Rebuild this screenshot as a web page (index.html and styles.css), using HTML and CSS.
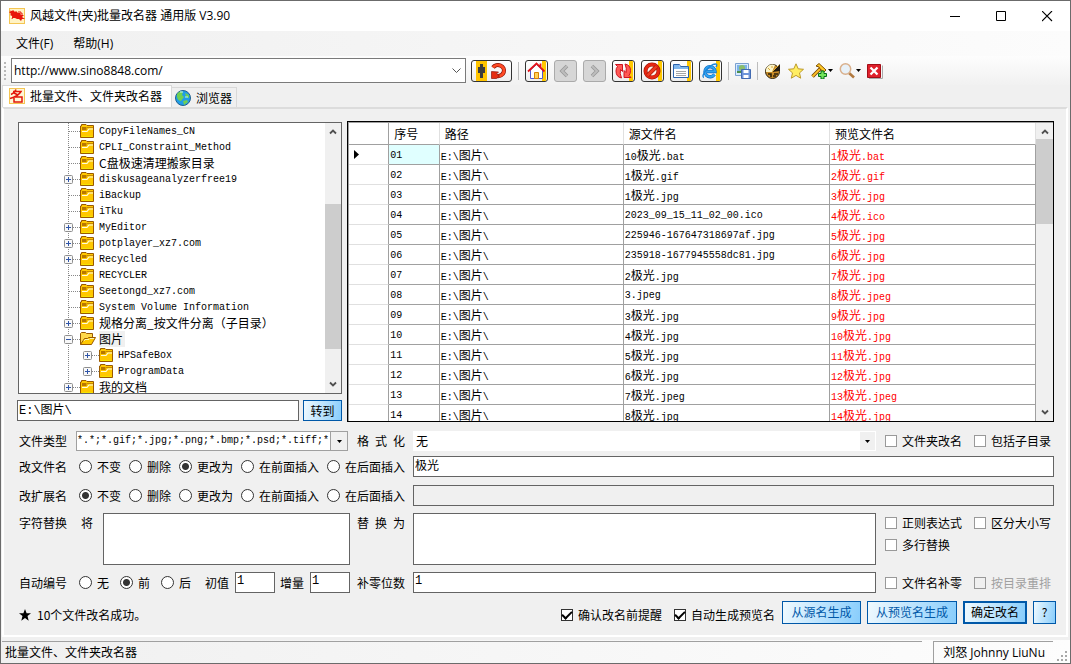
FILE: index.html
```html
<!DOCTYPE html>
<html lang="zh-CN">
<head>
<meta charset="utf-8">
<title>风越文件(夹)批量改名器 通用版 V3.90</title>
<link rel="stylesheet" href="styles.css">
</head>
<body>
<svg class="defs" aria-hidden="true">
  <symbol id="folder" viewBox="0 0 16 14">
    <path d="M.5 13.500v-11.500h1v-1.500h4.500l1 1h6.500v12z" fill="#ffc800" stroke="#9a5a00"/>
    <path d="M2 3h4.500v3h-4.500z" fill="#b87800"/>
    <path d="M7 3.500h6" stroke="#c98a00"/>
    <path d="M2 7.500h5l2-2.500h4" fill="none" stroke="#fffbe0" stroke-width="1.200"/>
    <path d="M2 12.500h10.500" stroke="#f4e400"/>
  </symbol>
  <symbol id="folder-open" viewBox="0 0 16 14">
    <path d="M.5 12.500v-11l1-1h4l1 1h6v4" fill="#ffd84a" stroke="#9a5a00"/>
    <path d="M.5 12.500l4-6h3l1-1h7l-4 7z" fill="#ffc800" stroke="#9a5a00"/>
    <path d="M4 9l1-1.500h4l1-1h4" fill="none" stroke="#fff6b0"/>
  </symbol>
  <symbol id="plus" viewBox="0 0 9 9">
    <rect x=".5" y=".5" width="8" height="8" rx="1" fill="#f8f8f8" stroke="#8e8e8e"/>
    <path d="M2 4.500h5M4.500 2v5" stroke="#2f55a8"/>
  </symbol>
  <symbol id="minus" viewBox="0 0 9 9">
    <rect x=".5" y=".5" width="8" height="8" rx="1" fill="#f8f8f8" stroke="#8e8e8e"/>
    <path d="M2 4.500h5" stroke="#2f55a8"/>
  </symbol>
  <symbol id="up" viewBox="0 0 8 6"><path d="M1 4.500l3-3 3 3" fill="none" stroke="#505050" stroke-width="1.800"/></symbol>
  <symbol id="down" viewBox="0 0 8 6"><path d="M1 1.500l3 3 3-3" fill="none" stroke="#505050" stroke-width="1.800"/></symbol>
  <symbol id="caret" viewBox="0 0 5 3"><path d="M0 0h5l-2.500 3z" fill="#000"/></symbol>
</svg>

<div class="window">
  <header class="titlebar">
    <svg class="app-icon" viewBox="0 0 16 16"><rect x=".5" y=".5" width="15" height="15" fill="#fff3c4" stroke="#f4c552"/><path d="M0 2l3 1 1-1 2 2 1-1 2 2 2 0 1 2 3 0-2 2 3 2-3 0-1 2-2-2-2 0-2-1-2 0-1-2-2-1 1-1-2-2 2-1z" fill="#e8170c"/><path d="M9 4h3v2h2M4 8l-1 3" fill="none" stroke="#e8170c"/></svg>
    <h1 class="title">风越文件(夹)批量改名器 通用版 V3.90</h1>
    <div class="captions">
      <button class="caption" aria-label="最小化"><svg viewBox="0 0 11 11"><path d="M0 5.500h10" stroke="#000"/></svg></button>
      <button class="caption" aria-label="最大化"><svg viewBox="0 0 11 11"><path d="M.5 .5h9v9h-9z" fill="none" stroke="#000"/></svg></button>
      <button class="caption" aria-label="关闭"><svg viewBox="0 0 11 11"><path d="M0 0l10 10M10 0L0 10" stroke="#000" stroke-width="1.100"/></svg></button>
    </div>
  </header>

  <nav class="menubar">
    <button class="menu">文件(F)</button>
    <button class="menu">帮助(H)</button>
  </nav>

  <div class="toolbar">
    <i class="grip"></i>
    <div class="combo address">
      <select aria-label="地址"><option>http://www.sino8848.com/</option></select>
      <svg class="chev" viewBox="0 0 9 6"><path d="M.5 .5l4 4 4-4" fill="none" stroke="#555"/></svg>
    </div>
    <button class="tool wide" aria-label="转到"><svg viewBox="0 0 39 20"><path d="M4 0h11v20h-11z" fill="#ffc400"/><path d="M8 3h3v3h2v6h-2v5h-3v-5h-2v-6h2z" fill="#3c3c3c"/><path d="M21 6.500a6 5.500 0 1 1 4 8.500" fill="none" stroke="#8c1208" stroke-width="4.200"/><path d="M21 6.500a6 5.500 0 1 1 4 8.500" fill="none" stroke="#ff4a24" stroke-width="2.800"/><path d="M19.500 17.500v-7l7 .5-2 2 3 2-3 2.500z" fill="#e62c10" stroke="#8c1208" stroke-width=".7"/></svg></button>
    <i class="sep"></i>
    <div class="tools">
      <button class="tool" aria-label="主页"><svg viewBox="0 0 21 20"><path d="M16 0h4v20h-4z" fill="#ffc800"/><path d="M4.500 9v8.500h12v-8.500l-6-5.500z" fill="#fff" stroke="#4f5ad0"/><path d="M8.500 17.500v-6h4v6z" fill="#ffd25a" stroke="#d98200"/><path d="M2 10.500l8.500-8 8 8M14.500 2.500v4" fill="none" stroke="#e3141b" stroke-width="1.800"/></svg></button>
      <button class="tool" disabled aria-label="后退"><svg viewBox="0 0 21 20"><path d="M12 5l-5 5 5 5" fill="none" stroke="#999" stroke-width="3.600"/><path d="M12 5l-5 5 5 5" fill="none" stroke="#bdbdbd" stroke-width="2"/></svg></button>
      <button class="tool" disabled aria-label="前进"><svg viewBox="0 0 21 20"><path d="M8 5l5 5-5 5" fill="none" stroke="#999" stroke-width="3.600"/><path d="M8 5l5 5-5 5" fill="none" stroke="#bdbdbd" stroke-width="2"/></svg></button>
      <button class="tool" aria-label="刷新"><svg viewBox="0 0 21 20"><path d="M16 0h4v20h-4z" fill="#ffc800"/><path d="M8.500 17q-5.500-1-5.500-7 0-3 1.500-4.500l-2-2h7v7l-2-2q-1 4 1 8.500zM12 3q5.500 1 5.500 6.500 0 3-1.500 5l2 2h-7v-7l2 2q1-4-1-8.500z" fill="#ff5a55" stroke="#cf1420"/></svg></button>
      <button class="tool" aria-label="停止"><svg viewBox="0 0 21 20"><path d="M16 0h4v20h-4z" fill="#ffc800"/><circle cx="10" cy="10" r="6.500" fill="#fff0e8" stroke="#9d1408" stroke-width="4"/><circle cx="10" cy="10" r="6.500" fill="none" stroke="#e62712" stroke-width="2.800"/><path d="M5.500 14.500l9-9" stroke="#b01a08" stroke-width="4"/><path d="M5.500 14.500l9-9" stroke="#ed3a20" stroke-width="2.500"/></svg></button>
      <button class="tool" aria-label="文件夹"><svg viewBox="0 0 21 20"><path d="M16 0h4v20h-4z" fill="#ffc800"/><path d="M2.500 16.500v-13h6l1 2h8v11z" fill="#fff" stroke="#2d63ac"/><path d="M3 4h5l1 2h8v2h-14z" fill="#80b7ed"/><path d="M5 10.500h10M5 12.500h10M5 14.500h10" stroke="#a6a6a6"/></svg></button>
      <button class="tool" aria-label="浏览"><svg viewBox="0 0 21 20"><path d="M16 0h4v20h-4z" fill="#ffc800"/><path d="M14.500 13.500q-2 2.500-4.500 2.200a5 5 0 1 1 5-5.200h-8" fill="none" stroke="#1169c4" stroke-width="3.400"/><path d="M14.500 13.500q-2 2.500-4.500 2.200a5 5 0 1 1 5-5.200h-8" fill="none" stroke="#2fa5f2" stroke-width="2.200"/><path d="M4 16.500c-4-1 5-13 11.500-13.500 2 0 1 2 .5 3" fill="none" stroke="#1d86da" stroke-width="1.400"/></svg></button>
    </div>
    <i class="sep"></i>
    <button class="flat" aria-label="保存图片"><svg viewBox="0 0 16 16"><path d="M.5 .5h13v12h-13z" fill="#d9ecff" stroke="#7ba0d0"/><path d="M2 2h10v8h-10z" fill="#7db3e8"/><circle cx="7" cy="5" r="3" fill="#8bbd6b"/><path d="M2 8h9v2h-9z" fill="#4c8f4a"/><path d="M6.500 6.500h9v9h-9z" fill="#6c94da" stroke="#416ab1"/><path d="M8.500 7h5v3h-5zM8.500 12h5v3h-5z" fill="#fff"/></svg></button>
    <i class="sep"></i>
    <div class="flats">
      <button class="flat" aria-label="选项"><svg viewBox="0 0 16 16"><circle cx="7.500" cy="8.500" r="7" fill="#c88c28" stroke="#2b210b"/><path d="M1 9a6.500 6.500 0 0 1 9-7l-3 7z" fill="#fbf4c8"/><path d="M7 9l8-8v7z" fill="#201a12"/><path d="M3 11h3v3M9 11h4M8 13h3" fill="none" stroke="#2b210b" stroke-width="1.600"/><path d="M7 9l7-7M3 5l2 2M7 3v2" stroke="#d9a93a"/></svg></button>
      <button class="flat" aria-label="收藏"><svg viewBox="0 0 16 16"><path d="M8 .8l2.200 5 5.300.5-4 3.600 1.200 5.300-4.700-2.800-4.700 2.800 1.200-5.300-4-3.600 5.300-.5z" fill="#ffee62" stroke="#bd9a2b"/></svg></button>
      <button class="flat drop" aria-label="工具"><svg viewBox="0 0 16 16"><path d="M1.500 13.500l8-8" stroke="#704500" stroke-width="3.500"/><path d="M1.500 13.500l8-8" stroke="#ffc028" stroke-width="1.800"/><path d="M5 3l3-2.500 7 6.500-2 2-4-3-1-2z" fill="#ffc928" stroke="#805000"/><path d="M10 8h3v2.500h2.500v3h-2.500v2.500h-3v-2.500h-2.500v-3h2.500z" fill="#73e45c" stroke="#047018"/></svg><svg class="caret"><use href="#caret"/></svg></button>
      <button class="flat drop" aria-label="搜索"><svg viewBox="0 0 16 16"><path d="M10 10l5 4.500" stroke="#b27a40" stroke-width="2.600"/><circle cx="6.500" cy="6" r="5.200" fill="#e8f1f8" stroke="#d9b08c" stroke-width="1.500"/></svg><svg class="caret"><use href="#caret"/></svg></button>
      <button class="flat" aria-label="关闭页面"><svg viewBox="0 0 16 16"><path d="M2 15.500h13.500v-13" fill="none" stroke="#aaa"/><path d="M.5 1.500h13v13h-13z" fill="#df202b" stroke="#a30e17"/><path d="M3.500 4.500l7 7M10.500 4.500l-7 7" stroke="#fff" stroke-width="2.300"/></svg></button>
    </div>
  </div>

  <div class="tabs">
    <button class="tab active"><svg viewBox="0 0 16 16"><rect x=".5" y=".5" width="15" height="15" fill="#fff7d6" stroke="#f4c552"/><path d="M7 1.500q-1 3-5 5M4 3.500h8q-3 5-11 7M5 5l4 2M5.500 9h7.500v5h-8v-4" fill="none" stroke="#e3170b" stroke-width="1.500"/></svg>批量文件、文件夹改名器</button>
    <button class="tab"><svg viewBox="0 0 16 16"><circle cx="8" cy="8" r="7.500" fill="#209de8" stroke="#21618f"/><path d="M2 4q3-4 6-2l-1 3 2 2-3 4q-3 0-4-4zM10 3l4 2v3l-3-1zM8 11l4-1 1 2-4 3z" fill="#6fd053"/><path d="M5 2h3M10 7h3" stroke="#b7efff"/></svg>浏览器</button>
  </div>

  <main class="page">
    <section class="browse">
      <div class="left">
        <div class="tree">
          <ul class="nodes">
            <li class="node"><span class="twig"></span><svg class="folder"><use href="#folder"/></svg><span>CopyFileNames_CN</span></li>
            <li class="node"><span class="twig"></span><svg class="folder"><use href="#folder"/></svg><span>CPLI_Constraint_Method</span></li>
            <li class="node"><span class="twig"></span><svg class="folder"><use href="#folder"/></svg><span class="zh">C盘极速清理搬家目录</span></li>
            <li class="node"><span class="twig"><svg><use href="#plus"/></svg></span><svg class="folder"><use href="#folder"/></svg><span>diskusageanalyzerfree19</span></li>
            <li class="node"><span class="twig"></span><svg class="folder"><use href="#folder"/></svg><span>iBackup</span></li>
            <li class="node"><span class="twig"></span><svg class="folder"><use href="#folder"/></svg><span>iTku</span></li>
            <li class="node"><span class="twig"><svg><use href="#plus"/></svg></span><svg class="folder"><use href="#folder"/></svg><span>MyEditor</span></li>
            <li class="node"><span class="twig"><svg><use href="#plus"/></svg></span><svg class="folder"><use href="#folder"/></svg><span>potplayer_xz7.com</span></li>
            <li class="node"><span class="twig"><svg><use href="#plus"/></svg></span><svg class="folder"><use href="#folder"/></svg><span>Recycled</span></li>
            <li class="node"><span class="twig"></span><svg class="folder"><use href="#folder"/></svg><span>RECYCLER</span></li>
            <li class="node"><span class="twig"></span><svg class="folder"><use href="#folder"/></svg><span>Seetongd_xz7.com</span></li>
            <li class="node"><span class="twig"></span><svg class="folder"><use href="#folder"/></svg><span>System Volume Information</span></li>
            <li class="node"><span class="twig"><svg><use href="#plus"/></svg></span><svg class="folder"><use href="#folder"/></svg><span class="zh">规格分离_按文件分离（子目录）</span></li>
            <li class="node"><span class="twig"><svg><use href="#minus"/></svg></span><svg class="folder"><use href="#folder-open"/></svg><span class="zh current">图片</span></li>
            <li class="node child"><span class="twig"><svg><use href="#plus"/></svg></span><svg class="folder"><use href="#folder"/></svg><span>HPSafeBox</span></li>
            <li class="node child"><span class="twig"><svg><use href="#plus"/></svg></span><svg class="folder"><use href="#folder"/></svg><span>ProgramData</span></li>
            <li class="node"><span class="twig"><svg><use href="#plus"/></svg></span><svg class="folder"><use href="#folder"/></svg><span class="zh">我的文档</span></li>
          </ul>
          <div class="scroll"><svg><use href="#up"/></svg><div class="track tree-track"><i class="thumb"></i></div><svg><use href="#down"/></svg></div>
        </div>
        <div class="path"><input class="field" aria-label="路径" value="E:\图片\"><button class="btn ink">转到</button></div>
      </div>
      <div class="grid">
        <div class="table-wrap">
          <table>
            <colgroup><col class="c-mark"><col class="c-no"><col class="c-path"><col class="c-src"><col class="c-new"></colgroup>
            <thead><tr><th></th><th>序号</th><th>路径</th><th>源文件名</th><th>预览文件名</th></tr></thead>
            <tbody>
              <tr><th><svg class="mark" viewBox="0 0 5 9"><path d="M0 0l5 4.500-5 4.500z"/></svg></th><td class="sel">01</td><td>E:\<span class="zh">图片</span>\</td><td>10<span class="zh">极光</span>.bat</td><td>1<span class="zh">极光</span>.bat</td></tr>
              <tr><th></th><td>02</td><td>E:\<span class="zh">图片</span>\</td><td>1<span class="zh">极光</span>.gif</td><td>2<span class="zh">极光</span>.gif</td></tr>
              <tr><th></th><td>03</td><td>E:\<span class="zh">图片</span>\</td><td>1<span class="zh">极光</span>.jpg</td><td>3<span class="zh">极光</span>.jpg</td></tr>
              <tr><th></th><td>04</td><td>E:\<span class="zh">图片</span>\</td><td>2023_09_15_11_02_00.ico</td><td>4<span class="zh">极光</span>.ico</td></tr>
              <tr><th></th><td>05</td><td>E:\<span class="zh">图片</span>\</td><td>225946-167647318697af.jpg</td><td>5<span class="zh">极光</span>.jpg</td></tr>
              <tr><th></th><td>06</td><td>E:\<span class="zh">图片</span>\</td><td>235918-1677945558dc81.jpg</td><td>6<span class="zh">极光</span>.jpg</td></tr>
              <tr><th></th><td>07</td><td>E:\<span class="zh">图片</span>\</td><td>2<span class="zh">极光</span>.jpg</td><td>7<span class="zh">极光</span>.jpg</td></tr>
              <tr><th></th><td>08</td><td>E:\<span class="zh">图片</span>\</td><td>3.jpeg</td><td>8<span class="zh">极光</span>.jpeg</td></tr>
              <tr><th></th><td>09</td><td>E:\<span class="zh">图片</span>\</td><td>3<span class="zh">极光</span>.jpg</td><td>9<span class="zh">极光</span>.jpg</td></tr>
              <tr><th></th><td>10</td><td>E:\<span class="zh">图片</span>\</td><td>4<span class="zh">极光</span>.jpg</td><td>10<span class="zh">极光</span>.jpg</td></tr>
              <tr><th></th><td>11</td><td>E:\<span class="zh">图片</span>\</td><td>5<span class="zh">极光</span>.jpg</td><td>11<span class="zh">极光</span>.jpg</td></tr>
              <tr><th></th><td>12</td><td>E:\<span class="zh">图片</span>\</td><td>6<span class="zh">极光</span>.jpg</td><td>12<span class="zh">极光</span>.jpg</td></tr>
              <tr><th></th><td>13</td><td>E:\<span class="zh">图片</span>\</td><td>7<span class="zh">极光</span>.jpeg</td><td>13<span class="zh">极光</span>.jpeg</td></tr>
              <tr><th></th><td>14</td><td>E:\<span class="zh">图片</span>\</td><td>8<span class="zh">极光</span>.jpg</td><td>14<span class="zh">极光</span>.jpg</td></tr>
            </tbody>
          </table>
        </div>
        <div class="scroll"><svg><use href="#up"/></svg><div class="track grid-track"><i class="thumb"></i></div><svg><use href="#down"/></svg></div>
      </div>
    </section>

    <form class="form">
      <div class="row r-type">
        <div class="lead">
          <label class="name" for="types">文件类型</label>
          <div class="combo types"><select id="types"><option>*.*;*.gif;*.jpg;*.png;*.bmp;*.psd;*.tiff;*.tga</option></select><span class="arrow"><svg class="caret"><use href="#caret"/></svg></span></div>
          <label class="name spread" for="format">格 式 化</label>
        </div>
        <div class="combo format"><select id="format"><option>无</option></select><span class="arrow"><svg class="caret"><use href="#caret"/></svg></span></div>
        <div class="checks"><label class="check"><input type="checkbox">文件夹改名</label><label class="check"><input type="checkbox">包括子目录</label></div>
      </div>

      <div class="row r-name">
        <div class="lead radios" role="radiogroup" aria-label="改文件名">
          <span class="name">改文件名</span>
          <label class="radio"><input type="radio" name="base">不变</label><label class="radio"><input type="radio" name="base">删除</label><label class="radio"><input type="radio" name="base" checked>更改为</label><label class="radio"><input type="radio" name="base">在前面插入</label><label class="radio"><input type="radio" name="base">在后面插入</label>
        </div>
        <input class="field" aria-label="新文件名" value="极光">
      </div>

      <div class="row r-ext">
        <div class="lead radios" role="radiogroup" aria-label="改扩展名">
          <span class="name">改扩展名</span>
          <label class="radio"><input type="radio" name="ext" checked>不变</label><label class="radio"><input type="radio" name="ext">删除</label><label class="radio"><input type="radio" name="ext">更改为</label><label class="radio"><input type="radio" name="ext">在前面插入</label><label class="radio"><input type="radio" name="ext">在后面插入</label>
        </div>
        <input class="field" aria-label="新扩展名" disabled>
      </div>

      <div class="row r-replace">
        <div class="lead">
          <span class="name">字符替换</span><label class="from" for="from">将</label>
          <textarea class="field" id="from"></textarea>
          <label class="name spread" for="to">替 换 为</label>
        </div>
        <textarea class="field" id="to"></textarea>
        <div class="checks"><label class="check"><input type="checkbox">正则表达式</label><label class="check"><input type="checkbox">区分大小写</label><label class="check"><input type="checkbox">多行替换</label></div>
      </div>

      <div class="row r-auto">
        <div class="lead">
          <span class="name">自动编号</span>
          <div class="radios order" role="radiogroup" aria-label="自动编号"><label class="radio"><input type="radio" name="auto">无</label><label class="radio"><input type="radio" name="auto" checked>前</label><label class="radio"><input type="radio" name="auto">后</label></div>
          <label class="num">初值<input class="field" value="1"></label>
          <label class="num">增量<input class="field" value="1"></label>
          <label class="name pad" for="digits">补零位数</label>
        </div>
        <input class="field" id="digits" value="1">
        <div class="checks"><label class="check"><input type="checkbox">文件名补零</label><label class="check off"><input type="checkbox" disabled>按目录重排</label></div>
      </div>

      <div class="actions">
        <div class="result"><svg viewBox="0 0 12 12"><path d="M6 0l1.600 4.300H12L8.500 7l1.200 4.700L6 9l-3.700 2.700L3.500 7 0 4.300h4.400z"/></svg>10个文件改名成功。</div>
        <label class="check"><input type="checkbox" checked>确认改名前提醒</label>
        <label class="check"><input type="checkbox" checked>自动生成预览名</label>
        <div class="buttons">
          <button type="button" class="btn w-src">从源名生成</button>
          <button type="button" class="btn w-pre">从预览名生成</button>
          <button type="button" class="btn w-ok ink primary">确定改名</button>
          <button type="button" class="btn w-help ink">?</button>
        </div>
      </div>
    </form>
  </main>

  <footer class="status">
    <div class="pane">批量文件、文件夹改名器</div>
    <div class="pane author">刘怒 Johnny LiuNu</div>
    <svg class="size" viewBox="0 0 12 12"><path d="M9 1h2v2h-2zM5 5h2v2h-2zM9 5h2v2h-2zM1 9h2v2h-2zM5 9h2v2h-2zM9 9h2v2h-2z" fill="#a8a8a8"/></svg>
  </footer>
</div>
</body>
</html>
```

FILE: styles.css
```css
:root {
  --ui: "Open Sans", "Noto Sans CJK SC", sans-serif;
  --cjk: "Noto Sans CJK SC", sans-serif;
  --mono: "Liberation Mono", "Noto Sans CJK SC", monospace;
}
* { box-sizing: border-box; }
body { margin: 0; font: 12px/16px var(--cjk); color: #000; background: #f0f0f0; }
button, input, select, textarea { font: inherit; color: inherit; margin: 0; padding: 0; border: 0; border-radius: 0; background: none; }
button, label { white-space: nowrap; }
svg { display: block; flex: none; }
.defs { position: absolute; width: 0; height: 0; }

.window { display: flex; flex-direction: column; height: 100vh; min-height: 640px; border: 1px solid #6b6b6b; background: #f0f0f0; overflow: hidden; }

/* title bar */
.titlebar { display: flex; align-items: center; height: 30px; padding-left: 8px; background: #fff; }
.app-icon { width: 16px; height: 16px; }
.title { flex: 1; margin: 0 0 0 5px; font: 12px/16px var(--ui); }
.captions { display: flex; }
.caption { display: grid; place-items: center; width: 46px; height: 30px; }
.caption svg { width: 11px; height: 11px; }

/* menu and toolbar */
.menubar { display: flex; gap: 20px; height: 25px; padding: 0 15px; background: linear-gradient(90deg, #f0f0f0, #fcfcfc); font-family: var(--ui); }
.toolbar { display: flex; align-items: center; height: 29px; padding: 0 3px; background: linear-gradient(#fdfdfd, #f1f1f1); }
.grip { width: 2px; height: 18px; margin-right: 5px; background: repeating-linear-gradient(#b8b8b8 0 2px, transparent 2px 4px); }
.combo { position: relative; display: flex; background: #fff; }
.combo select { width: 100%; min-width: 0; appearance: none; outline: 0; }
.address { width: 455px; height: 25px; border: 1px solid #7a7a7a; font: 12px/16px var(--ui); margin-right: 5px; }
.address select { padding-left: 2px; }
.chev { position: absolute; right: 4px; top: 9px; width: 9px; height: 6px; }
.tools { display: flex; gap: 6px; }
.tool { width: 23px; height: 22px; border: 1px solid #333; border-radius: 3px; background: linear-gradient(#fff, #eee); overflow: hidden; }
.tool svg { width: 100%; height: 20px; }
.tool.wide { width: 41px; }
.tool:disabled { border-color: #aaa; background: #d6d6d6; }
.sep { width: 1px; height: 18px; margin: 0 6px; background: #bdbdbd; }
.flat { display: flex; align-items: center; }
.flat svg { width: 16px; height: 16px; }
.flat .caret, .caret { width: 5px; height: 3px; }
.flats { display: flex; gap: 7px; margin-left: 1px; }
.flats .drop { gap: 1px; margin-right: -1px; }

/* tabs */
.tabs { display: flex; align-items: flex-end; height: 22px; padding-left: 1px; }
.tab { display: flex; align-items: center; gap: 5px; height: 20px; padding: 1px 4px 0 3px; border: 1px solid #d9d9d9; border-width: 1px 1px 0 0; }
.tab svg { width: 16px; height: 16px; }
.tab.active { height: 22px; padding: 0 9px 2px 6px; border-width: 1px 1px 0; background: #fff; }

/* page */
.page { flex: 1; display: flex; flex-direction: column; min-height: 0; margin: 0 2px 3px 1px; padding: 12px 12px 11px 13px; border: 2px solid #fff; border-top-color: #dcdcdc; }
.browse { flex: 1; display: grid; grid-template-columns: 325fr 707fr; gap: 5px; min-height: 0; }
.left { display: flex; flex-direction: column; min-width: 0; min-height: 0; padding-top: 1px; }
.tree { flex: 1; display: flex; min-height: 0; margin-left: 1px; border: 1px solid #646464; background: #fff; overflow: hidden; }
.nodes { flex: 1; margin: 0; padding: 0 0 0 45px; list-style: none; overflow: hidden; font: 10px/16px var(--mono); background: repeating-linear-gradient(#888 0 1px, #fff 1px 2px) 49px 0 / 1px 100% no-repeat; }
.node { display: flex; align-items: center; height: 16px; white-space: nowrap; }
.node > span:last-child:not(.zh) { padding-top: 2px; }
.node.child { padding-left: 19px; }
.twig { display: flex; align-items: center; width: 16px; height: 16px; background: repeating-linear-gradient(90deg, #888 0 1px, transparent 1px 2px) 5px 8px / 11px 1px no-repeat; }
.twig svg { width: 9px; height: 9px; }
.folder { width: 16px; height: 14px; margin-right: 3px; }
.zh { font: 12px/16px var(--cjk); }
.current { background: #f0f0f0; padding-right: 2px; }
.scroll { flex: none; display: flex; flex-direction: column; align-items: center; width: 16px; background: #f0f0f0; padding: 6px 0; }
.scroll svg { width: 8px; height: 6px; }
.track { flex: 1; display: flex; flex-direction: column; width: 100%; }
.thumb { background: #cdcdcd; }
.tree-track { padding-top: 69px; }
.tree-track .thumb { flex: 0 0 145px; }
.grid-track { padding-top: 4px; }
.grid-track .thumb { flex: 0 0 85px; }

.path { display: flex; gap: 4px; margin-top: 6px; height: 22px; }
.path .field { flex: 1; }
.path .btn { width: 39px; height: 21px; }
.field { min-width: 0; height: 21px; padding: 0 1px 4px; border: 1px solid #646464; background: #fff; font: 12px/14px var(--mono); resize: none; outline: 0; }
.field:disabled { background: #f0f0f0; }

.grid { display: flex; min-width: 0; min-height: 0; border: 1px solid #000; box-shadow: inset 1px 1px #a0a0a0; padding: 1px 0 0 1px; overflow: hidden; }
.grid .scroll { width: 17px; }
.table-wrap { flex: 1; min-width: 0; overflow: hidden; background: #fff; }
table { width: 100%; table-layout: fixed; border-collapse: separate; border-spacing: 0; font: 10px/13px var(--mono); }
.c-mark { width: 40px; }
.c-no { width: 50px; }
.c-path { width: 26.8%; }
.c-src, .c-new { width: 30%; }
th, td { height: 20px; padding: 0 2px; border: solid #a0a0a0; border-width: 0 1px 1px 0; text-align: left; font-weight: 400; white-space: nowrap; }
td { padding: 2px 1px 0; }
td .zh { line-height: 13px; }
thead th { height: 22px; padding: 0 5px; border-right-color: #e0e0e0; font: 12px/16px var(--cjk); }
thead th:first-child { border-right-color: #a0a0a0; }
tbody th { border-bottom-color: #e0e0e0; }
td:last-child { color: #f00; }
.sel { background: #e0ffff; }
.mark { width: 5px; height: 9px; margin-left: 3px; }

/* form */
.form { flex: none; padding: 9px 0 0 2px; }
.row { display: flex; gap: 8px; }
.lead { flex: none; display: flex; align-items: center; width: 386px; }
.name { width: 48px; flex: none; }
.row > .field, .format { flex: 1; min-width: 0; }
.spread { margin-left: auto; text-align-last: justify; }
.checks { flex: none; display: grid; grid-template-columns: 77px 77px; column-gap: 12px; row-gap: 6px; align-content: center; width: 170px; padding-left: 1px; }
.check, .radio { display: flex; align-items: center; gap: 5px; }
.check input { appearance: none; display: grid; place-items: center; width: 12px; height: 12px; border: 1px solid #999; background: #fff; }
.check input:checked { border-color: #333; }
.check input:checked::before { content: ""; width: 8px; height: 4px; border: solid #000; border-width: 0 0 2px 2px; rotate: -45deg; margin-bottom: 2px; }
.check.off { color: #a0a0a0; }
.check.off input { background: #f0f0f0; }
.radios { gap: 8px; }
.radio input { appearance: none; width: 13px; height: 13px; border: 1px solid #333; border-radius: 50%; background: #fff; }
.radio input:checked { background: radial-gradient(circle, #333 3px, #fff 4px); }
.lead.radios .name { margin-right: 4px; }
.types { width: 272px; height: 20px; margin-left: 9px; border: 1px solid #a0a0a0; font: 10px/16px var(--mono); }
.types select { padding-right: 17px; }
.arrow { position: absolute; right: 0; top: 0; bottom: 0; display: grid; place-items: center; width: 17px; border-left: 1px solid #a0a0a0; background: #f0f0f0; pointer-events: none; }
.format { height: 20px; }
.format select { padding-left: 3px; }
.format .arrow { border: 1px solid #fff; }
.r-name { margin-top: 5px; }
.r-ext { margin-top: 8px; }
.r-replace { margin-top: 7px; }
.r-replace .lead { align-items: flex-start; }
.r-replace .name, .r-replace .from { margin-top: 2px; }
.from { margin: 0 10px 0 14px; }
.r-replace .field { height: 52px; }
.lead textarea { flex: 1; margin-right: 7px; }
.r-replace .checks { align-content: start; padding-top: 2px; }
.r-auto { margin-top: 7px; }
.order { display: flex; gap: 11px; margin: 0 14px 0 12px; }
.num { display: flex; align-items: center; gap: 6px; margin-right: 5px; }
.num .field { width: 40px; }
.pad { margin-left: auto; }
.actions { display: flex; align-items: center; gap: 12px; margin-top: 7px; margin-right: -2px; height: 24px; }
.actions > .check { padding-top: 6px; }
.result { flex: 1; display: flex; align-items: center; gap: 6px; padding-top: 6px; }
.result svg { width: 12px; height: 12px; }
.buttons { display: flex; gap: 6px; margin-left: -5px; }
.btn { height: 23px; border: 1px solid #0058a8; background: linear-gradient(100deg, #f0faff, #88cdfc); color: #0058a8; text-align: center; }
.btn.ink { color: #000; }
.primary { border-width: 2px; }
.w-src { width: 79px; }
.w-pre { width: 90px; }
.w-ok { width: 64px; }
.w-help { width: 23px; }

/* status bar */
.status { display: flex; gap: 11px; height: 23px; padding: 1px 1px 0; background: linear-gradient(90deg, #f0f0f0, #fdfdfd); font: 12px/16px var(--ui); }
.pane { flex: 1; padding: 3px 3px 0; border-top: 1px solid #a0a0a0; }
.author { flex: none; padding: 3px 8px 0 9px; border-left: 1px solid #a0a0a0; }
.size { align-self: flex-end; width: 12px; height: 12px; margin: 0 1px 1px -8px; }
```
